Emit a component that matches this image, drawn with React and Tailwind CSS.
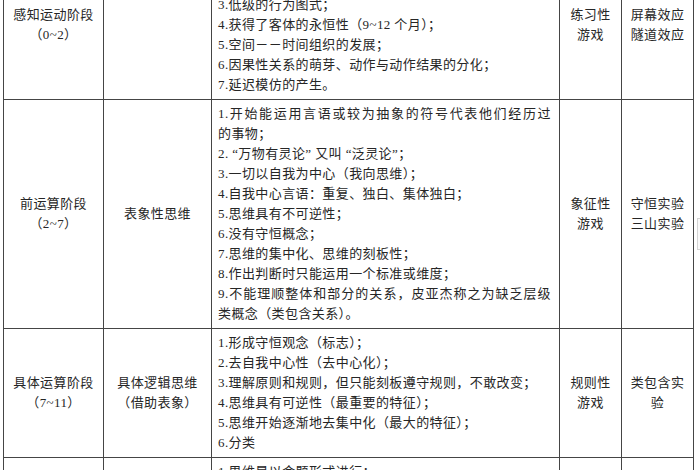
const stages = [
  {
    stage: ["感知运动阶段", "（0~2）"],
    thought: [],
    lines: [
      { t: "1.主要通过感觉和动作来认识周围世界；" },
      { t: "2.开始协调感觉、知觉和动作间的活动；" },
      { t: "3.低级的行为图式；" },
      { t: "4.获得了客体的永恒性（9~12 个月）；" },
      { t: "5.空间－－时间组织的发展；" },
      { t: "6.因果性关系的萌芽、动作与动作结果的分化；" },
      { t: "7.延迟模仿的产生。" },
    ],
    game: ["练习性", "游戏"],
    exp: ["屏幕效应", "隧道效应"],
  },
  {
    stage: ["前运算阶段", "（2~7）"],
    thought: ["表象性思维"],
    lines: [
      { t: "1.开始能运用言语或较为抽象的符号代表他们经历过", j: true },
      { t: "的事物；" },
      { t: "2. “万物有灵论” 又叫 “泛灵论”；" },
      { t: "3.一切以自我为中心（我向思维）；" },
      { t: "4.自我中心言语：重复、独白、集体独白；" },
      { t: "5.思维具有不可逆性；" },
      { t: "6.没有守恒概念；" },
      { t: "7.思维的集中化、思维的刻板性；" },
      { t: "8.作出判断时只能运用一个标准或维度；" },
      { t: "9.不能理顺整体和部分的关系，皮亚杰称之为缺乏层级", j: true },
      { t: "类概念（类包含关系）。" },
    ],
    game: ["象征性", "游戏"],
    exp: ["守恒实验", "三山实验"],
  },
  {
    stage: ["具体运算阶段", "（7~11）"],
    thought: ["具体逻辑思维", "（借助表象）"],
    lines: [
      { t: "1.形成守恒观念（标志）；" },
      { t: "2.去自我中心性（去中心化）；" },
      { t: "3.理解原则和规则，但只能刻板遵守规则，不敢改变；" },
      { t: "4.思维具有可逆性（最重要的特征）；" },
      { t: "5.思维开始逐渐地去集中化（最大的特征）；" },
      { t: "6.分类" },
    ],
    game: ["规则性", "游戏"],
    exp: ["类包含实", "验"],
  },
  {
    stage: ["形式运算阶段", "（11~）"],
    thought: ["抽象逻辑思维"],
    lines: [
      { t: "1.思维是以命题形式进行；" },
      { t: "2.能够根据逻辑推理、归纳或演绎的方式来解决问题；" },
      { t: "3.思维具有可逆性、补偿性和灵活性；" },
      { t: "4.能理解符号的意义、隐喻和直喻。" },
    ],
    game: [],
    exp: [],
  },
];

function Centered({ items }) {
  return (
    <td className="border border-[#454545] px-[4px] py-[4px] text-center align-middle">
      {items.map((s) => (
        <div key={s} className="whitespace-nowrap">
          {s}
        </div>
      ))}
    </td>
  );
}

export default function App() {
  return (
    <div className="relative h-[470px] w-[700px] overflow-hidden bg-white">
      <table className="-mt-[50px] ml-[3px] w-[691px] table-fixed border-collapse font-['Liberation_Serif','Noto_Sans_CJK_SC',sans-serif] text-[13px] leading-[20px] tracking-[0.4px] text-[#262626]">
        <colgroup>
          <col className="w-[100px]" />
          <col className="w-[108px]" />
          <col className="w-[348px]" />
          <col className="w-[62px]" />
          <col className="w-[72px]" />
        </colgroup>
        <tbody>
          {stages.map((row, i) => (
            <tr key={i}>
              <Centered items={row.stage} />
              <Centered items={row.thought} />
              <td className="border border-[#454545] pt-[4px] pb-[4px] pl-[6px] pr-[8px] text-left align-top">
                {row.lines.map((line) =>
                  line.j ? (
                    <div key={line.t} className="text-justify [text-align-last:justify]">
                      {line.t}
                    </div>
                  ) : (
                    <div key={line.t} className="whitespace-nowrap">
                      {line.t}
                    </div>
                  )
                )}
              </td>
              <Centered items={row.game} />
              <Centered items={row.exp} />
            </tr>
          ))}
        </tbody>
      </table>

      {/* edge of a floating side widget */}
      <div className="absolute left-[697px] top-[218px] flex h-[32px] w-[12px] items-center border border-[#d4d4d4] bg-[#fafafa]">
        <div className="ml-[2px] h-px w-[3px] bg-[#555]" />
      </div>
    </div>
  );
}
